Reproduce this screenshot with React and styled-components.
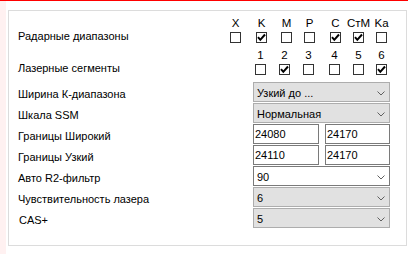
import React from "react";
import styled, { createGlobalStyle } from "styled-components";

const Global = createGlobalStyle`
  html, body { margin: 0; padding: 0; background: #ffffff; }
  body { font-family: "Liberation Sans", Arial, sans-serif; font-size: 11px; color: #000; }
`;

const Page = styled.div`
  width: 408px;
  height: 254px;
  box-sizing: border-box;
  border-top: 1px solid #ff0000;
  display: flex;
  overflow: hidden;
`;

const Strip = styled.div`
  width: 6px;
  flex: none;
  background: #fff1f1;
`;

const Content = styled.div`
  flex: 1;
  padding: 9px 1px 0 2px;
`;

const GroupBox = styled.div`
  box-sizing: border-box;
  height: 236px;
  border: 1px solid #dcdcdc;
  padding: 5px 0 0 9px;
  display: flex;
  flex-direction: column;
`;

const CheckSection = styled.div`
  display: flex;
  align-items: flex-end;
  margin-top: ${(p) => p.$mt}px;
`;

const SectionLabel = styled.div`
  width: 212px;
  flex: none;
  line-height: 14px;
  white-space: nowrap;
`;

const Item = styled.div`
  width: 11px;
  flex: none;
  display: flex;
  flex-direction: column;
  align-items: center;
  margin-left: ${(p) => p.$ml}px;
`;

const ItemHead = styled.div`
  font-size: 11.5px;
  line-height: 14px;
  white-space: nowrap;
  margin-bottom: 2px;
`;

const Box = styled.div`
  width: 11px;
  height: 11px;
  box-sizing: border-box;
  border: 1px solid #333333;
  background: #fff;
  display: flex;
  align-items: center;
  justify-content: center;
`;

const FormGrid = styled.div`
  display: grid;
  grid-template-columns: 235px 137px;
  grid-auto-rows: 20px;
  row-gap: 1px;
  margin-top: 7px;
`;

const FieldLabel = styled.div`
  display: flex;
  align-items: center;
  padding-top: 3px;
  padding-left: ${(p) => (p.$indent ? 1 : 0)}px;
  white-space: nowrap;
`;

const Combo = styled.div`
  box-sizing: border-box;
  height: 20px;
  border: 1px solid ${(p) => (p.$white ? "#7a7a7a" : "#adadad")};
  background: ${(p) => (p.$white ? "#ffffff" : "#e1e1e1")};
  display: flex;
  align-items: center;
  padding: 2px 4px 0 3px;
  justify-content: space-between;
`;

const InputPair = styled.div`
  display: flex;
  gap: 6px;
`;

const TextInput = styled.div`
  box-sizing: border-box;
  width: ${(p) => p.$w}px;
  height: 20px;
  border: 1px solid #7a7a7a;
  background: #fff;
  padding: 2px 0 0 1px;
  line-height: 14px;
`;

const Check = () => (
  <svg width="9" height="9" viewBox="0 0 9 9">
    <path d="M1 4.2 L3.3 6.8 L8 1.5" fill="none" stroke="#000" strokeWidth="2" />
  </svg>
);

const Chevron = () => (
  <svg width="8" height="5" viewBox="0 0 8 5">
    <polyline points="0.5,0.5 4,4 7.5,0.5" fill="none" stroke="#606060" strokeWidth="1" />
  </svg>
);

const radar = [
  { h: "X", c: false, ml: 0 },
  { h: "K", c: true, ml: 15 },
  { h: "M", c: false, ml: 14 },
  { h: "P", c: false, ml: 12 },
  { h: "C", c: true, ml: 15 },
  { h: "CтM", c: true, ml: 12 },
  { h: "Ka", c: false, ml: 12 },
];

const laser = [
  { h: "1", c: false, ml: 25 },
  { h: "2", c: true, ml: 13 },
  { h: "3", c: false, ml: 13 },
  { h: "4", c: false, ml: 15 },
  { h: "5", c: false, ml: 13 },
  { h: "6", c: true, ml: 12 },
];

function Checks({ label, items, mt }) {
  return (
    <CheckSection $mt={mt}>
      <SectionLabel>{label}</SectionLabel>
      {items.map((it) => (
        <Item key={it.h} $ml={it.ml}>
          <ItemHead>{it.h}</ItemHead>
          <Box>{it.c && <Check />}</Box>
        </Item>
      ))}
    </CheckSection>
  );
}

function Select({ value, white }) {
  return (
    <Combo $white={white}>
      <span>{value}</span>
      <Chevron />
    </Combo>
  );
}

export default function App() {
  return (
    <>
      <Global />
      <Page>
        <Strip />
        <Content>
          <GroupBox>
            <Checks label="Радарные диапазоны" items={radar} mt={0} />
            <Checks label="Лазерные сегменты" items={laser} mt={5} />
            <FormGrid>
              <FieldLabel>Ширина К-диапазона</FieldLabel>
              <Select value="Узкий до ..." />
              <FieldLabel>Шкала SSM</FieldLabel>
              <Select value="Нормальная" />
              <FieldLabel>Границы Широкий</FieldLabel>
              <InputPair>
                <TextInput $w={66}>24080</TextInput>
                <TextInput $w={65}>24170</TextInput>
              </InputPair>
              <FieldLabel>Границы Узкий</FieldLabel>
              <InputPair>
                <TextInput $w={66}>24110</TextInput>
                <TextInput $w={65}>24170</TextInput>
              </InputPair>
              <FieldLabel>Авто R2-фильтр</FieldLabel>
              <Select value="90" white />
              <FieldLabel>Чувствительность лазера</FieldLabel>
              <Select value="6" />
              <FieldLabel $indent>CAS+</FieldLabel>
              <Select value="5" />
            </FormGrid>
          </GroupBox>
        </Content>
      </Page>
    </>
  );
}
